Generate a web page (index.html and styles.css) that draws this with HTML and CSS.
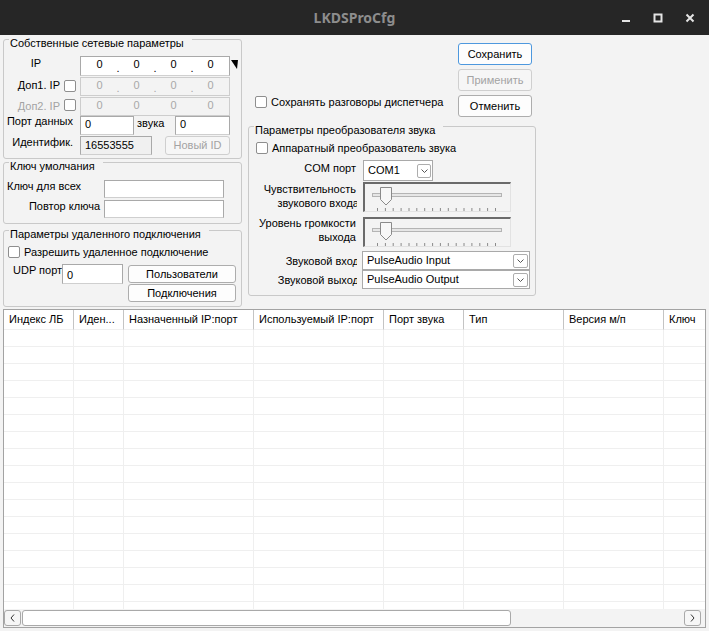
FILE: index.html
```html
<!DOCTYPE html>
<html lang="ru">
<head>
<meta charset="utf-8">
<title>LKDSProCfg</title>
<link rel="stylesheet" href="styles.css">
</head>
<body>
<header class="titlebar">
  <div></div>
  <div class="title">LKDSProCfg</div>
  <div class="wctl">
    <span class="wbtn"><svg width="10" height="10" viewBox="0 0 10 10"><rect x="1" y="7" width="8" height="2" fill="#e4e4e4"/></svg></span>
    <span class="wbtn"><svg width="10" height="10" viewBox="0 0 10 10"><rect x="1.5" y="1.5" width="7" height="7" fill="none" stroke="#e4e4e4" stroke-width="2"/></svg></span>
    <span class="wbtn"><svg width="10" height="10" viewBox="0 0 10 10"><path d="M1.5 1.5L8.5 8.5M8.5 1.5L1.5 8.5" stroke="#e4e4e4" stroke-width="2"/></svg></span>
  </div>
</header>

<main class="client">
  <div class="top">
    <div class="leftcol">
      <section class="group g1">
        <div class="gtitle">Собственные сетевые параметры</div>
        <div class="row r-ip">
          <div class="lbox lb-ip">IP</div>
          <div class="ipf"><span class="seg">0</span><span class="dot">.</span><span class="seg">0</span><span class="dot">.</span><span class="seg">0</span><span class="dot">.</span><span class="seg">0</span></div>
          <svg class="ipmark" width="7" height="9" viewBox="0 0 7 9"><polygon points="0,0 7,0 6,9" fill="#000"/></svg>
        </div>
        <div class="row r-d1">
          <div class="lbox lb-d"><span class="ltxt lt1">Доп1. IP</span><span class="cb cb-d1"></span></div>
          <div class="ipf dis"><span class="seg">0</span><span class="dot">.</span><span class="seg">0</span><span class="dot">.</span><span class="seg">0</span><span class="dot">.</span><span class="seg">0</span></div>
        </div>
        <div class="row r-d2">
          <div class="lbox lb-d"><span class="ltxt lt2 grey">Доп2. IP</span><span class="cb cb-d2"></span></div>
          <div class="ipf dis"><span class="seg">0</span><span class="dot"></span><span class="seg">0</span><span class="dot"></span><span class="seg">0</span><span class="dot"></span><span class="seg">0</span></div>
        </div>
        <div class="row r-port">
          <div class="lbox lb-r lb-port">Порт данных</div>
          <div class="inp w-port">0</div>
          <div class="lb-snd">звука</div>
          <div class="inp w-port2">0</div>
        </div>
        <div class="row r-id">
          <div class="lbox lb-r lb-id">Идентифик.</div>
          <div class="inp ro w-id">16553555</div>
          <div class="btn dis w-newid">Новый ID</div>
        </div>
      </section>

      <section class="group g2">
        <div class="gtitle">Ключ умолчания</div>
        <div class="row r-k1">
          <div class="lbox2 lk1">Ключ для всех</div>
          <div class="inp w-key"></div>
        </div>
        <div class="row r-k2">
          <div class="lbox2 lk2">Повтор ключа</div>
          <div class="inp w-key"></div>
        </div>
      </section>

      <section class="group g3">
        <div class="gtitle">Параметры удаленного подключения</div>
        <div class="row r-remote">
          <span class="cb"></span><span class="cbtxt">Разрешить удаленное подключение</span>
        </div>
        <div class="row r-udp">
          <div class="lb-udp">UDP порт</div>
          <div class="inp w-udp">0</div>
          <div class="udpbtns">
            <div class="btn w-ub">Пользователи</div>
            <div class="btn w-ub">Подключения</div>
          </div>
        </div>
      </section>
    </div>

    <div class="rightcol">
      <div class="actions">
        <div class="row r-save">
          <span class="cb"></span><span class="cbtxt">Сохранять разговоры диспетчера</span>
        </div>
        <div class="abtns">
          <div class="btn abtn def">Сохранить</div>
          <div class="btn abtn dis">Применить</div>
          <div class="btn abtn">Отменить</div>
        </div>
      </div>

      <section class="group g4">
        <div class="gtitle">Параметры преобразователя звука</div>
        <div class="row r-hw">
          <span class="cb"></span><span class="cbtxt">Аппаратный преобразователь звука</span>
        </div>
        <div class="row r-com">
          <div class="slbl l-com">COM порт</div>
          <div class="combo c-com"><span class="ctext">COM1</span><span class="dd dd-s"><svg width="7" height="4" viewBox="0 0 7 4"><path d="M0.5 0.5L3.5 3.5L6.5 0.5" fill="none" stroke="#555" stroke-width="1"/></svg></span></div>
        </div>
        <div class="row r-s1">
          <div class="slbl two l-s1">Чувствительность<br><span class="cut">звукового входа</span></div>
          <div class="slider">
            <svg width="145" height="27" viewBox="0 0 145 27">
              <rect x="7.5" y="9.5" width="129" height="3" fill="#e6e6e6" stroke="#b4b4b4"/>
              <polygon points="15.5,3.5 26.5,3.5 26.5,15.5 21,21 15.5,15.5" fill="#f7f7f7" stroke="#8a8a8a"/>
              <g stroke="#8a8a8a">
                <path d="M12.5 24v4M20.4 24v3M28.2 24v3M36.1 24v3M44 24v3M51.8 24v3M59.7 24v3M67.6 24v3M75.4 24v3M83.3 24v3M91.2 24v3M99 24v3M106.9 24v3M114.8 24v3M122.6 24v3M130.5 24v4"/>
              </g>
            </svg>
          </div>
        </div>
        <div class="row r-s2">
          <div class="slbl two l-s2">Уровень громкости<br>выхода</div>
          <div class="slider">
            <svg width="145" height="27" viewBox="0 0 145 27">
              <rect x="7.5" y="9.5" width="129" height="3" fill="#e6e6e6" stroke="#b4b4b4"/>
              <polygon points="15.5,3.5 26.5,3.5 26.5,15.5 21,21 15.5,15.5" fill="#f7f7f7" stroke="#8a8a8a"/>
              <g stroke="#8a8a8a">
                <path d="M12.5 24v4M20.4 24v3M28.2 24v3M36.1 24v3M44 24v3M51.8 24v3M59.7 24v3M67.6 24v3M75.4 24v3M83.3 24v3M91.2 24v3M99 24v3M106.9 24v3M114.8 24v3M122.6 24v3M130.5 24v4"/>
              </g>
            </svg>
          </div>
        </div>
        <div class="row r-in">
          <div class="slbl l-in"><span class="cut">Звуковой вход</span></div>
          <div class="combo c-snd"><span class="ctext">PulseAudio Input</span><span class="dd"><svg width="7" height="4" viewBox="0 0 7 4"><path d="M0.5 0.5L3.5 3.5L6.5 0.5" fill="none" stroke="#555" stroke-width="1"/></svg></span></div>
        </div>
        <div class="row r-out">
          <div class="slbl l-out"><span class="cut">Звуковой выход</span></div>
          <div class="combo c-snd"><span class="ctext">PulseAudio Output</span><span class="dd"><svg width="7" height="4" viewBox="0 0 7 4"><path d="M0.5 0.5L3.5 3.5L6.5 0.5" fill="none" stroke="#555" stroke-width="1"/></svg></span></div>
        </div>
      </section>
    </div>
  </div>

  <div class="tablewrap">
    <div class="grid">
      <div class="trow thead">
        <div>Индекс ЛБ</div><div>Иден...</div><div>Назначенный IP:порт</div><div>Используемый IP:порт</div><div>Порт звука</div><div>Тип</div><div>Версия м/п</div><div>Ключ</div>
      </div>
      <div class="trow"><div></div><div></div><div></div><div></div><div></div><div></div><div></div><div></div></div>
      <div class="trow"><div></div><div></div><div></div><div></div><div></div><div></div><div></div><div></div></div>
      <div class="trow"><div></div><div></div><div></div><div></div><div></div><div></div><div></div><div></div></div>
      <div class="trow"><div></div><div></div><div></div><div></div><div></div><div></div><div></div><div></div></div>
      <div class="trow"><div></div><div></div><div></div><div></div><div></div><div></div><div></div><div></div></div>
      <div class="trow"><div></div><div></div><div></div><div></div><div></div><div></div><div></div><div></div></div>
      <div class="trow"><div></div><div></div><div></div><div></div><div></div><div></div><div></div><div></div></div>
      <div class="trow"><div></div><div></div><div></div><div></div><div></div><div></div><div></div><div></div></div>
      <div class="trow"><div></div><div></div><div></div><div></div><div></div><div></div><div></div><div></div></div>
      <div class="trow"><div></div><div></div><div></div><div></div><div></div><div></div><div></div><div></div></div>
      <div class="trow"><div></div><div></div><div></div><div></div><div></div><div></div><div></div><div></div></div>
      <div class="trow"><div></div><div></div><div></div><div></div><div></div><div></div><div></div><div></div></div>
      <div class="trow"><div></div><div></div><div></div><div></div><div></div><div></div><div></div><div></div></div>
      <div class="trow"><div></div><div></div><div></div><div></div><div></div><div></div><div></div><div></div></div>
      <div class="trow"><div></div><div></div><div></div><div></div><div></div><div></div><div></div><div></div></div>
      <div class="trow"><div></div><div></div><div></div><div></div><div></div><div></div><div></div><div></div></div>
      <div class="trow"><div></div><div></div><div></div><div></div><div></div><div></div><div></div><div></div></div>
    </div>
    <div class="hscroll">
      <span class="sbtn"><svg width="5" height="8" viewBox="0 0 5 8"><path d="M4 0.5L1 4L4 7.5" fill="none" stroke="#333" stroke-width="1"/></svg></span>
      <span class="thumb"></span>
      <span class="track"></span>
      <span class="sbtn"><svg width="5" height="8" viewBox="0 0 5 8"><path d="M1 0.5L4 4L1 7.5" fill="none" stroke="#333" stroke-width="1"/></svg></span>
    </div>
  </div>
</main>
</body>
</html>
```

FILE: styles.css
```css
* { box-sizing: border-box; margin: 0; padding: 0; }
body {
  width: 709px; height: 631px; overflow: hidden;
  background: #f3f3f3;
  font: 11px/13px "Liberation Sans", Arial, sans-serif;
  color: #000;
}
.titlebar {
  height: 35px; background: #262626;
  display: grid; grid-template-columns: 1fr auto 1fr; align-items: center;
}
.title { color: #8d8d8d; font: bold 14px/16px "Noto Sans", sans-serif; }
.wctl { justify-self: end; display: flex; padding-right: 3px; }
.wbtn { width: 32px; height: 35px; display: flex; align-items: center; justify-content: center; }

.client { padding: 0 3px; display: flex; flex-direction: column; }
.top { display: flex; height: 272px; }
.leftcol { width: 239px; padding-top: 4px; display: flex; flex-direction: column; }
.rightcol { width: 288px; margin-left: 6px; display: flex; flex-direction: column; }

.group { border: 1px solid #c9c9c9; border-radius: 3px; display: flex; flex-direction: column; }
.gtitle { align-self: flex-start; margin: -3px 0 0 5px; padding: 0 8px 0 1px; background: #f3f3f3; height: 13px; white-space: nowrap; }
.row { display: flex; align-items: flex-start; }
.grey { color: #a3a3a3; }

.cb { width: 12px; height: 12px; border: 1px solid #8e8e8e; border-radius: 2px; background: #fff; flex: none; }
.cbtxt { margin-left: 4px; white-space: nowrap; line-height: 12px; }

/* group 1 */
.g1 { height: 120px; }
.lbox { width: 76px; flex: none; white-space: nowrap; }
.r-ip { margin-top: 6px; height: 20px; }
.lb-ip { text-align: center; padding-right: 12px; margin-top: 1px; }
.ipf {
  width: 150px; height: 20px; display: flex; padding: 1px 2px 0;
  background: #fff; border: 1px solid #a9a9a9; border-bottom-color: #d0d0d0;
  line-height: 12px;
}
.ipf.dis { background: #f3f3f3; color: #a8a8a8; border-color: #cdcdcd; height: 19px; }
.seg { width: 33px; text-align: center; }
.dot { width: 4px; text-align: center; padding-top: 4px; }
.ipf.dis .dot { padding-top: 3px; }
.ipmark { margin: 4px 0 0 1px; }
.r-d1 { margin-top: 1px; height: 19px; }
.r-d2 { margin-top: 1px; height: 19px; }
.lb-d { display: flex; justify-content: flex-end; align-items: flex-start; }
.lt1 { margin-top: 2px; }
.lt2 { margin-top: 3px; }
.cb-d1 { margin: 3px 4px 0 4px; }
.cb-d2 { margin: 2px 4px 0 4px; }
.r-port { margin-top: 0; height: 19px; }
.lb-r { text-align: right; padding-right: 7px; }
.lb-port { margin-top: -1px; }
.inp {
  height: 19px; background: #fff; border: 1px solid #a9a9a9; border-bottom-color: #cfcfcf;
  line-height: 12px; padding: 1px 0 0 4px; white-space: nowrap; flex: none;
}
.w-port { width: 54px; }
.lb-snd { width: 41px; padding-left: 3px; margin-top: 1px; }
.w-port2 { width: 55px; }
.r-id { margin-top: 1px; height: 19px; }
.lb-id { margin-top: 0; }
.ro { background: #f0f0f0; width: 72px; padding-top: 2px; }
.btn {
  background: #fdfdfd; border: 1px solid #adadad; border-radius: 3px;
  display: flex; align-items: center; justify-content: center; white-space: nowrap;
}
.btn.dis { color: #a3a3a3; border-color: #cfcfcf; background: #f6f6f6; }
.w-newid { width: 65px; height: 19px; margin-left: 13px; }

/* group 2 */
.g2 { height: 62px; margin-top: 3px; }
.lbox2 { width: 100px; flex: none; white-space: nowrap; }
.r-k1 { margin-top: 7px; }
.r-k2 { margin-top: 2px; }
.lk1 { padding-left: 3px; }
.lk2 { text-align: right; padding-right: 4px; }
.w-key { width: 120px; height: 18px; }

/* group 3 */
.g3 { height: 77px; margin-top: 6px; }
.r-remote { margin-top: 5px; padding-left: 4px; height: 12px; }
.r-udp { margin-top: 6px; }
.lb-udp { width: 58px; padding-left: 9px; flex: none; white-space: nowrap; }
.w-udp { width: 61px; height: 20px; padding-top: 4px; }
.udpbtns { margin: 1px 0 0 5px; display: flex; flex-direction: column; gap: 1px; }
.w-ub { width: 108px; height: 18px; }

/* right column */
.actions { display: flex; justify-content: space-between; margin-top: 8px; }
.r-save { align-self: flex-end; margin: 0 0 9px 7px; height: 12px; }
.abtns { display: flex; flex-direction: column; gap: 4px; margin-right: 4px; }
.abtn { width: 74px; height: 22px; }
.abtn.def { border-color: #4d98de; }

.g4 { height: 170px; margin-top: 9px; }
.r-hw { margin-top: 5px; padding-left: 7px; height: 12px; }
.slbl { width: 108px; flex: none; text-align: right; padding-right: 1px; white-space: nowrap; overflow: hidden; }
.slbl.two { line-height: 14px; }
.cut { display: inline-block; margin-right: -3px; }
.combo {
  display: flex; align-items: center; background: #fff; border: 1px solid #a9a9a9; flex: none;
}
.ctext { flex: 1; padding-left: 4px; white-space: nowrap; }
.dd {
  width: 15px; height: 14px; border: 1px solid #adadad; border-radius: 2px; background: #fff;
  display: flex; align-items: center; justify-content: center; margin-right: 1px; flex: none;
}
.dd-s { width: 14px; }
.r-com { margin-top: 6px; }
.l-com { margin-top: 2px; }
.c-com { width: 70px; height: 21px; margin-left: 6px; }
.r-s1 { margin-top: 1px; }
.l-s1 { margin-top: 0; }
.r-s2 { margin-top: 5px; }
.l-s2 { margin-top: -1px; }
.slider {
  width: 148px; height: 30px; margin-left: 6px; flex: none;
  border-style: solid; border-width: 2px 1px 1px 2px;
  border-color: #6a6a6a #e2e2e2 #e2e2e2 #6a6a6a;
  display: flex;
}
.r-in { margin-top: 4px; }
.l-in { margin-top: 4px; }
.r-out { margin-top: 0; }
.l-out { margin-top: 4px; }
.c-snd { width: 168px; height: 19px; margin-left: 5px; }

/* table */
.tablewrap {
  margin-top: 2px; height: 319px; border: 1px solid #a3a3a3;
  display: flex; flex-direction: column; background: #fff;
}
.grid { flex: 1; overflow: hidden; }
.trow { display: grid; grid-template-columns: 70px 50px 130px 130px 80px 100px 100px 200px; height: 17px; }
.trow > div { border-right: 1px solid #efefef; border-bottom: 1px solid #efefef; }
.thead { height: 20px; }
.thead > div { border-right-color: #c4c4c4; border-bottom-color: #f0f0f0; padding-left: 5px; line-height: 19px; white-space: nowrap; overflow: hidden; }
.hscroll { height: 18px; background: #f3f3f3; display: flex; padding: 1px 4px 1px 0; gap: 1px; }
.sbtn {
  width: 17px; border: 1px solid #a9a9a9; border-radius: 3px; background: #f6f6f6;
  display: flex; align-items: center; justify-content: center; flex: none;
}
.thumb { width: 489px; border: 1px solid #a9a9a9; border-radius: 3px; background: #fff; flex: none; }
.track { flex: 1; }
```
